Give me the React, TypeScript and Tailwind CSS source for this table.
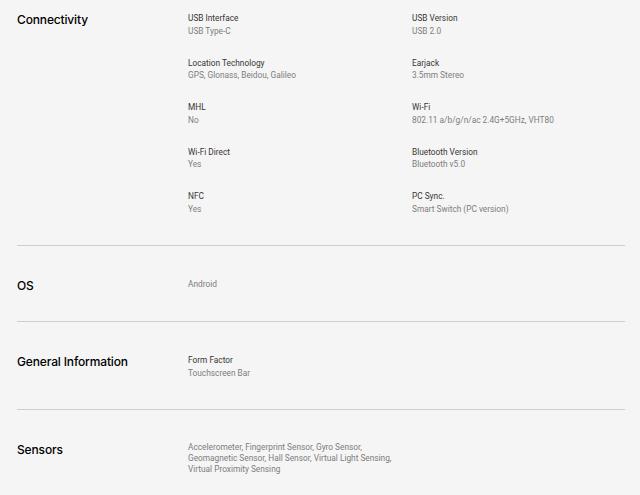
const connectivity = [
  { label: "USB Interface", value: "USB Type-C" },
  { label: "USB Version", value: "USB 2.0" },
  { label: "Location Technology", value: "GPS, Glonass, Beidou, Galileo" },
  { label: "Earjack", value: "3.5mm Stereo" },
  { label: "MHL", value: "No" },
  { label: "Wi-Fi", value: "802.11 a/b/g/n/ac 2.4G+5GHz, VHT80" },
  { label: "Wi-Fi Direct", value: "Yes" },
  { label: "Bluetooth Version", value: "Bluetooth v5.0" },
  { label: "NFC", value: "Yes" },
  { label: "PC Sync.", value: "Smart Switch (PC version)" },
];

const bodyFont = "font-['Roboto','Liberation_Sans',sans-serif]";
const headFont = "font-['Inter','Liberation_Sans',sans-serif]";

const Spec = ({ label, value }: { label?: string; value: string }) => (
  <div className={`${bodyFont} text-[8.3px] leading-[12.5px]`}>
    {label && <div className="text-[#363636]">{label}</div>}
    <div className="text-[#7d7d7d]">{value}</div>
  </div>
);

const Title = ({ children }: { children: string }) => (
  <h3 className={`${headFont} w-[171px] shrink-0 text-[12px] leading-[16px] font-medium tracking-[-0.15px] text-black`}>
    {children}
  </h3>
);

export default function App() {
  return (
    <div className="min-h-[495px] bg-[#f5f5f5] pl-[17px] pr-[15px]">
      {/* Connectivity */}
      <section className="flex items-start border-b border-[#cfcfcf] pt-[12px] pb-[30px]">
        <Title>Connectivity</Title>
        <div className="grid grid-cols-[224px_1fr] gap-y-[19.5px]">
          {connectivity.map((s) => (
            <Spec key={s.label} label={s.label} value={s.value} />
          ))}
        </div>
      </section>

      {/* OS */}
      <section className="flex items-start border-b border-[#cfcfcf] pt-[32px] pb-[27px]">
        <Title>OS</Title>
        <Spec value="Android" />
      </section>

      {/* General Information */}
      <section className="flex items-start border-b border-[#cfcfcf] pt-[32px] pb-[30px]">
        <Title>General Information</Title>
        <Spec label="Form Factor" value="Touchscreen Bar" />
      </section>

      {/* Sensors */}
      <section className="flex items-start pt-[32px] pb-[20px]">
        <Title>Sensors</Title>
        <div className={`${bodyFont} w-[205px] text-[8.3px] leading-[11px] text-[#7d7d7d]`}>
          Accelerometer, Fingerprint Sensor, Gyro Sensor, Geomagnetic Sensor, Hall Sensor, Virtual Light Sensing, Virtual Proximity Sensing
        </div>
      </section>
    </div>
  );
}
